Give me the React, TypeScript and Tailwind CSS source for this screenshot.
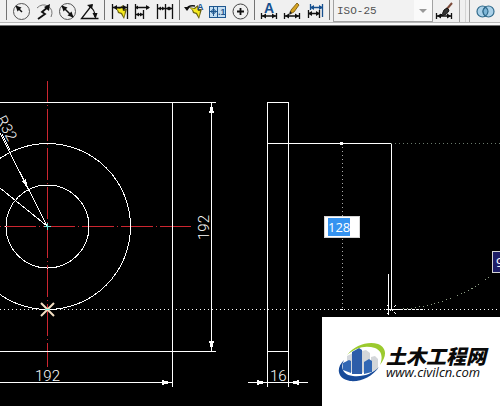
import type { ReactNode } from 'react';

function Separator() {
  return <span className="ml-[2px] mr-[3px] h-5 w-px shrink-0 bg-neutral-500" />;
}

function Tool({ label, children }: { label: string; children: ReactNode }) {
  return (
    <button
      aria-label={label}
      className="flex h-[22px] w-[23px] shrink-0 items-center justify-center"
    >
      <svg
        width="21"
        height="20"
        viewBox="0 0 21 20"
        fill="none"
        stroke="#111"
        strokeWidth="1"
      >
        {children}
      </svg>
    </button>
  );
}

// yellow lightning bolt shared by the quick dimension tools
function Bolt() {
  return (
    <g stroke="none">
      <path d="M5 6l5 1 4-3 1 4 3 0-3 10-3-5-3-1-1-3z" fill="#6b6410" />
      <path d="M6 7l5 1 2-2 1 4 2 0-1 6-2-4-3-1-1-2z" fill="#f6ea1e" />
    </g>
  );
}

function Span({ y }: { y: number }) {
  return (
    <g transform={`translate(0 ${y})`}>
      <path d="M2.500-3v6M17.500-3v6" strokeWidth="1.3" />
      <path d="M3 0h14" strokeWidth="1.5" />
      <path d="M3 0l4-2.500v5zM17 0l-4-2.500v5z" fill="#111" stroke="none" />
    </g>
  );
}

function Toolbar() {
  return (
    <header className="flex h-[26px] shrink-0 items-start overflow-hidden border-b border-neutral-500 bg-[#f0f0f0] pl-1 shadow-[inset_0_-2px_0_#fafafa,inset_0_-3px_0_#b8b8b8]">
      <Separator />
      <Tool label="Radius">
        <circle cx="10.5" cy="10.500" r="8" stroke="#555" />
        <path d="M11 11L6 6" strokeWidth="1.5" />
        <path d="M4.500 4.500l6 2-4 4z" fill="#111" stroke="none" />
      </Tool>
      <Tool label="Jogged radius">
        <path d="M3 7q5-5 11-2 6 4 3 11" stroke="#777" />
        <path d="M4 18l7-5-3-2 6-5" strokeWidth="1.8" />
        <path d="M16 3l-1 7-5-4z" fill="#111" stroke="none" />
      </Tool>
      <Tool label="Diameter">
        <circle cx="10.5" cy="10.500" r="8" stroke="#555" />
        <path d="M5 5l11 11" strokeWidth="1.5" />
        <path d="M4.500 4.500l6 2-4 4zM16.500 16.500l-6-2 4-4z" fill="#111" stroke="none" />
      </Tool>
      <Tool label="Angular">
        <path d="M18.500 17.500h-17L12 4" strokeWidth="1.3" />
        <path d="M9 5q6 3 6 11" strokeWidth="1.2" />
        <path d="M7 4l6-1-1 5zM12.500 12h5l-2 6z" fill="#111" stroke="none" />
      </Tool>
      <Separator />
      <Tool label="Quick dimension">
        <Bolt />
        <path d="M3.500 3v15M18.500 3v15M4 6.500h15" strokeWidth="1.3" />
        <path d="M4 6.500l4-2.500v5zM18 6.500l-4-2.500v5z" fill="#111" stroke="none" />
      </Tool>
      <Tool label="Baseline">
        <path d="M3.500 3v15M11.500 9v9M3 6.500h14M3 13.500h8" strokeWidth="1.3" />
        <path
          d="M18 6.500l-4-2.500v5zM3 6.500l3-2v4zM4 13.500l3-2v4zM11 13.500l-3-2v4z"
          fill="#111"
          stroke="none"
        />
      </Tool>
      <Tool label="Continue">
        <path d="M2.500 3v15M10.500 3v15M17.500 3v15M3 7.500h15" strokeWidth="1.3" />
        <path
          d="M3 7.500l3-2v4zM10 7.500l-3-2v4zM11 7.500l3-2v4zM17 7.500l-3-2v4z"
          fill="#111"
          stroke="none"
        />
      </Tool>
      <Separator />
      <Tool label="Dimension update">
        <Bolt />
        <path d="M3 8q1-4 8-3" strokeWidth="1.4" />
        <path d="M0 6h6l-3 4z" fill="#111" stroke="none" />
        <text
          x="13"
          y="9"
          fill="#17508f"
          stroke="none"
          className="font-['Liberation_Sans'] text-[9px] font-bold"
        >
          A
        </text>
      </Tool>
      <Tool label="Tolerance">
        <rect x="2.5" y="5.500" width="16" height="11" fill="#c4def2" stroke="#1f578f" />
        <path d="M10.500 5v12M6.500 6v9M3 10.500h7" stroke="#1f578f" />
        <circle cx="6.5" cy="10.500" r="2" stroke="#1f578f" />
        <text
          x="11"
          y="14"
          fill="#1f578f"
          stroke="none"
          className="font-['Liberation_Sans'] text-[9px] font-bold"
        >
          .1
        </text>
      </Tool>
      <Tool label="Center mark">
        <circle cx="10.500" cy="10.500" r="7.500" stroke="#444" />
        <path d="M7 10.500h7M10.500 7v7" strokeWidth="1.800" />
      </Tool>
      <Separator />
      <Tool label="Dimension edit">
        <text
          x="5"
          y="12"
          fill="#17508f"
          stroke="none"
          className="font-['Liberation_Sans'] text-[14px] font-bold"
        >
          A
        </text>
        <Span y={15} />
      </Tool>
      <Tool label="Dimension text edit">
        <Span y={15} />
        <path d="M8 13l1-4 6-7 2 2-5 7z" fill="#d6a322" stroke="#70520c" strokeWidth="0.800" />
        <path d="M7 14l1-4 2 2z" fill="#222" stroke="none" />
      </Tool>
      <Tool label="Dimension style override">
        <path d="M5.500 3v6M17.500 3v13M5 6.500h13" stroke="#17508f" strokeWidth="1.300" />
        <path d="M5 6.500l4-2.500v5zM18 6.500l-4-2.500v5z" fill="#17508f" stroke="none" />
        <path d="M3.500 9v8M14.500 9v8M4 12.500h10" strokeWidth="1.300" />
        <path d="M3 12.500l4-2.500v5zM15 12.500l-4-2.500v5z" fill="#111" stroke="none" />
      </Tool>
      <Separator />
      <div className="relative h-[22px] w-[100px] shrink-0">
        <select
          disabled
          aria-label="Dimension style"
          className="block h-[22px] w-full appearance-none border border-t-0 border-neutral-400 bg-[#f2f2f2] py-0 pl-[3px] font-['Liberation_Mono',monospace] text-[11px] leading-5 text-neutral-600 opacity-100"
        >
          <option>ISO-25</option>
        </select>
        <span className="pointer-events-none absolute bottom-px right-px top-0 flex w-[18px] items-center justify-center bg-[#fafafa]">
          <svg width="8" height="4" viewBox="0 0 8 4">
            <path d="M0 0h8l-4 4z" fill="#999" />
          </svg>
        </span>
      </div>
      <Tool label="Dimension style manager">
        <Span y={15} />
        <path d="M18 2l-6 7" stroke="#7b4a3a" strokeWidth="2" />
        <path d="M13 7l2 2q-1 5-9 6 3-2 4-6z" fill="#333" stroke="#111" />
      </Tool>
      <span className="ml-[3px] h-[22px] w-px shrink-0 bg-neutral-400" />
      <span className="ml-[5px] h-[22px] w-px shrink-0 bg-neutral-300" />
      <span className="ml-[3px] mr-1 h-[22px] w-px shrink-0 bg-neutral-400" />
      <Tool label="Union">
        <g fill="#a9d0e8" stroke="#316b8c" strokeWidth="1.200">
          <circle cx="7.500" cy="10.500" r="5.500" />
          <circle cx="13.500" cy="10.500" r="5.500" />
          <path d="M10.500 6q-5 4.500 0 9 5-4.500 0-9z" fill="#7db5d6" />
        </g>
      </Tool>
    </header>
  );
}

function Drawing() {
  const label = "font-['Roboto',sans-serif] text-[15px] font-light";
  return (
    <svg
      className="absolute inset-0 h-full w-full"
      fill="none"
      stroke="#fff"
      shapeRendering="crispEdges"
      aria-label="Flange drawing"
    >
      {/* centre lines */}
      <g stroke="#cc2630" strokeDasharray="32 3 1 3">
        <path d="M47.500 55v286" strokeDashoffset="11" />
        <path d="M0 200.500h191" strokeDashoffset="35" />
      </g>

      {/* plate, front view */}
      <path d="M0 76.500h216M0 325.500h216M172.500 76v285M211.500 76v249M0 356.500h172" />
      <circle cx="47.500" cy="200.500" r="83" />
      <circle cx="47.500" cy="200.500" r="41.500" />
      <path d="M0 107L47 200M0 162l47 38M2 108l8 16" />

      {/* plate, side view */}
      <path d="M267.500 361v-285h21v285M267 325.500h22M267 117.500h125M391.500 117v166M248 356.500h60" />

      {/* arrow heads */}
      <g fill="#fff" stroke="none">
        <path d="M211.500 77l2.500 10h-5zM211.500 325l2.500-10h-5z" />
        <path d="M172 356.500l-10-2.500v5zM267 356.500l-10-2.500v5zM289 356.500l10-2.500v5z" />
        <path d="M28 163l-2-10-4 2z" />
      </g>

      {/* tracking lines */}
      <g strokeDasharray="1 3">
        <path d="M0 283.500h500" />
        <path d="M342.500 117v166" stroke="#aaa" />
        <path d="M391 117.500h109" stroke="#6a7a6c" />
        <path d="M391 283.500A166 166 0 0 0 497 245" stroke="#8c9c84" />
      </g>
      <path d="M340 116h3v3h-3zM340 283h3v1h-3z" fill="#fff" stroke="none" />

      {/* snap marker and cursor */}
      <path
        d="M41 277l13 13M54 277l-13 13"
        stroke="#f4dfc2"
        strokeWidth="2"
        shapeRendering="auto"
      />
      <path d="M44 200.500h7M47.500 197v7M45 283.500h5" stroke="#6fe6d8" />
      <path d="M388.500 248v41M386 283.500h14" />
      <path d="M400 283.500h23" strokeDasharray="3 1" />
      <path d="M387 279l9 9M396 279l-9 9" strokeDasharray="3 2" />

      <g fill="#fff" stroke="none" className={label}>
        <text x="35" y="355">
          192
        </text>
        <text x="270" y="355">
          16
        </text>
        <text transform="translate(209 214) rotate(-90)">192</text>
        <text transform="translate(-4 93) rotate(62)">R32</text>
      </g>
    </svg>
  );
}

function Brand() {
  return (
    <a
      href="#"
      className="absolute bottom-0 right-0 flex h-[89px] w-[178px] items-center bg-white pl-[15px]"
    >
      <svg width="49" height="40" viewBox="0 0 49 40" className="shrink-0">
        <path d="M10 14l6-3v20l-6-3z" fill="#d3d7dc" />
        <path d="M25 9l4-1 4 3v17l-8 3z" fill="#d3d6d9" />
        <path d="M34 15l4-1 3 3v10l-7 3z" fill="#d3d6d9" />
        <path d="M15 10l7-4 3 2v24h-10z" fill="#2d5da9" />
        <path d="M6 21l6-3 2 1v12l-8-3zM27 20l5-3 3 2v11l-8 2z" fill="#3267b4" />
        <path
          d="M10 13C18 3 31-1 41 2c9 4 9 12 2 21 3-8 2-14-5-17-9-3-19-1-28 7z"
          fill="#9bca2e"
        />
        <path
          d="M7 18c-4 8-1 15 9 16 10 1 19-2 26-9-7 10-18 15-29 14C1 37-2 27 7 18z"
          fill="#174a99"
        />
      </svg>
      <span className="flex flex-col pt-[3px] text-neutral-950">
        <span className="whitespace-nowrap font-['Noto_Sans_CJK_SC',sans-serif] text-[20px] font-black italic leading-[18px]">
          土木工程网
        </span>
        <span className="whitespace-nowrap font-['Open_Sans',sans-serif] text-[13px] font-medium italic leading-[14px]">
          www.civilcn.com
        </span>
      </span>
    </a>
  );
}

export default function App() {
  return (
    <div className="flex min-h-screen flex-col bg-black">
      <Toolbar />
      <main className="relative flex-1 overflow-hidden bg-black">
        <Drawing />
        <label className="absolute left-[324px] top-[190px] flex h-[22px] w-9 items-center border border-neutral-300 bg-white pl-[3px]">
          <input
            aria-label="Length"
            defaultValue="128"
            className="h-[18px] w-[22px] bg-[#3593f0] font-['Open_Sans',sans-serif] text-[13px] leading-[18px] text-white outline-none"
          />
        </label>
        <output className="absolute left-[492px] top-[225px] h-[22px] w-9 border border-neutral-300 bg-[#1d1d66] pl-[3px] font-['Open_Sans',sans-serif] text-[13px] leading-5 text-white">
          90
        </output>
        <Brand />
      </main>
    </div>
  );
}
